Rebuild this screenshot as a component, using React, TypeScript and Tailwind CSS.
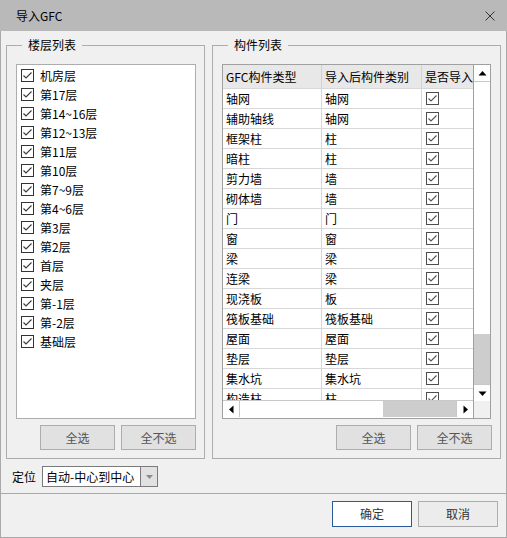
import React from "react";

const floors = [
  "机房层",
  "第17层",
  "第14~16层",
  "第12~13层",
  "第11层",
  "第10层",
  "第7~9层",
  "第4~6层",
  "第3层",
  "第2层",
  "首层",
  "夹层",
  "第-1层",
  "第-2层",
  "基础层",
];

const parts: [string, string][] = [
  ["轴网", "轴网"],
  ["辅助轴线", "轴网"],
  ["框架柱", "柱"],
  ["暗柱", "柱"],
  ["剪力墙", "墙"],
  ["砌体墙", "墙"],
  ["门", "门"],
  ["窗", "窗"],
  ["梁", "梁"],
  ["连梁", "梁"],
  ["现浇板", "板"],
  ["筏板基础", "筏板基础"],
  ["屋面", "屋面"],
  ["垫层", "垫层"],
  ["集水坑", "集水坑"],
  ["构造柱", "柱"],
];

function CheckBox({ gray }: { gray?: boolean }) {
  return (
    <span
      className={`flex h-[13px] w-[13px] shrink-0 items-center justify-center border bg-white ${
        gray ? "border-[#4d4d4d]" : "border-[#333333]"
      }`}
    >
      <svg width="11" height="11" viewBox="0 0 11 11">
        <path d="M1.5 5.5 L4 8 L9.5 2.5" fill="none" stroke={gray ? "#555555" : "#3a3a3a"} strokeWidth="1.1" />
      </svg>
    </span>
  );
}

function Arrow({ dir }: { dir: "up" | "down" | "left" | "right" }) {
  const d = {
    up: "M0.5 6.5 L4.5 2 L8.5 6.5 Z",
    down: "M0.5 2.5 L8.5 2.5 L4.5 7 Z",
    left: "M6.5 0.5 L6.5 8.5 L2 4.5 Z",
    right: "M2.5 0.5 L2.5 8.5 L7 4.5 Z",
  }[dir];
  return (
    <svg width="9" height="9" viewBox="0 0 9 9">
      <path d={d} fill="#000" />
    </svg>
  );
}

function GrayButton({ label }: { label: string }) {
  return (
    <button className="flex h-[25px] w-[75px] items-center justify-center border border-[#adadad] bg-[#e1e1e1] text-[12px] text-[#555555]">
      {label}
    </button>
  );
}

export default function App() {
  return (
    <div
      className="flex h-[538px] w-[507px] flex-col border-x border-b border-[#a9a9a9] bg-[#f0f0f0] text-[12px] text-black"
      style={{ fontFamily: '"Noto Sans CJK SC", "Microsoft YaHei", sans-serif' }}
    >
      {/* 标题栏 */}
      <div className="-mx-px flex h-[31px] shrink-0 items-center justify-between bg-[#b9b9b9] pl-[16px] pr-[12px]">
        <span className="text-[12px] leading-none">导入GFC</span>
        <svg width="10" height="10" viewBox="0 0 10 10">
          <path d="M0.5 0.5 L9.5 9.5 M9.5 0.5 L0.5 9.5" stroke="#333" strokeWidth="1" />
        </svg>
      </div>

      <div className="flex flex-col px-[5px] pt-[6px]">
        <div className="flex gap-[7px]">
          {/* 楼层列表 */}
          <fieldset className="flex h-[422px] w-[199px] flex-col border border-[#adadad] pb-[8px] pl-[9px] pr-[8px]">
            <legend className="ml-[6px] px-[6px] text-[12px] leading-[16px]">楼层列表</legend>
            <div className="mt-[11px] h-[355px] border border-[#adadad] bg-white pt-[1px]">
              {floors.map((f) => (
                <div key={f} className="flex h-[19px] items-center gap-[6px] pl-[4px]">
                  <CheckBox />
                  <span className="leading-none">{f}</span>
                </div>
              ))}
            </div>
            <div className="mt-[6px] flex justify-end gap-[6px]">
              <GrayButton label="全选" />
              <GrayButton label="全不选" />
            </div>
          </fieldset>

          {/* 构件列表 */}
          <fieldset className="flex h-[422px] w-[289px] flex-col border border-[#adadad] pb-[8px] pl-[9px] pr-[8px]">
            <legend className="ml-[6px] px-[6px] text-[12px] leading-[16px]">构件列表</legend>
            <div className="mt-[11px] flex h-[355px] w-[269px] border border-[#a0a0a0] bg-white">
              <div className="flex w-[250px] flex-col">
                <div className="h-[335px] overflow-hidden">
                  <div className="flex h-[23px] w-[300px] bg-[#e8e8e8]">
                    <div className="flex w-[99px] items-center border-r border-[#d2d2d2] pl-[3px]">GFC构件类型</div>
                    <div className="flex w-[100px] items-center border-r border-[#d2d2d2] pl-[3px]">导入后构件类别</div>
                    <div className="flex w-[100px] items-center whitespace-nowrap pl-[3px]">是否导入</div>
                  </div>
                  {parts.map(([a, b], i) => (
                    <div key={i} className="flex h-[20px] w-[300px] border-t border-[#d7d7d7]">
                      <div className="flex w-[99px] items-center border-r border-[#d7d7d7] pl-[3px]">{a}</div>
                      <div className="flex w-[100px] items-center border-r border-[#d7d7d7] pl-[3px]">{b}</div>
                      <div className="flex w-[100px] items-center border-r border-[#d7d7d7] pl-[4px]">
                        <CheckBox gray />
                      </div>
                    </div>
                  ))}
                </div>
                {/* 水平滚动条 */}
                <div className="flex h-[17px] border-t border-[#c8c8c8]">
                  <div className="flex w-[17px] items-center justify-center border-r border-[#c8c8c8] bg-white">
                    <Arrow dir="left" />
                  </div>
                  <div className="flex-1 bg-white" />
                  <div className="w-[73px] bg-[#cdcdcd]" />
                  <div className="flex w-[17px] items-center justify-center border-l border-[#c8c8c8] bg-white">
                    <Arrow dir="right" />
                  </div>
                </div>
              </div>
              {/* 垂直滚动条 */}
              <div className="flex w-[17px] flex-col border-l border-[#a0a0a0]">
                <div className="flex h-[17px] items-center justify-center border-b border-[#c8c8c8] bg-white">
                  <Arrow dir="up" />
                </div>
                <div className="flex-1 bg-white" />
                <div className="h-[50px] bg-[#cdcdcd]" />
                <div className="flex h-[17px] items-center justify-center border-t border-[#c8c8c8] bg-white">
                  <Arrow dir="down" />
                </div>
                <div className="h-[17px] bg-[#f0f0f0]" />
              </div>
            </div>
            <div className="mt-[6px] flex justify-end gap-[6px]">
              <GrayButton label="全选" />
              <GrayButton label="全不选" />
            </div>
          </fieldset>
        </div>

        {/* 定位 */}
        <div className="mt-[7px] mb-[6px] flex h-[21px] items-center pl-[6px]">
          <span className="w-[30px] text-[12px]">定位</span>
          <div className="flex h-[21px] w-[116px] border border-[#7a7a7a] bg-white">
            <span className="flex flex-1 items-center whitespace-nowrap pl-[3px]">自动-中心到中心</span>
            <div className="flex w-[17px] items-center justify-center border-l border-[#7a7a7a] bg-[#e1e1e1]">
              <svg width="7" height="4" viewBox="0 0 7 4">
                <path d="M0 0 L7 0 L3.5 4 Z" fill="#8a8a8a" />
              </svg>
            </div>
          </div>
        </div>
      </div>

      {/* 底部按钮 */}
      <div className="flex flex-1 justify-end gap-[6px] border-t border-[#a9a9a9] pr-[8px] pt-[7px]">
        <button className="flex h-[26px] w-[80px] items-center justify-center border border-[#2b5a9a] bg-white text-[12px] text-[#333]">
          确定
        </button>
        <button className="flex h-[26px] w-[80px] items-center justify-center border border-[#adadad] bg-[#ececec] text-[12px] text-[#333]">
          取消
        </button>
      </div>
    </div>
  );
}
